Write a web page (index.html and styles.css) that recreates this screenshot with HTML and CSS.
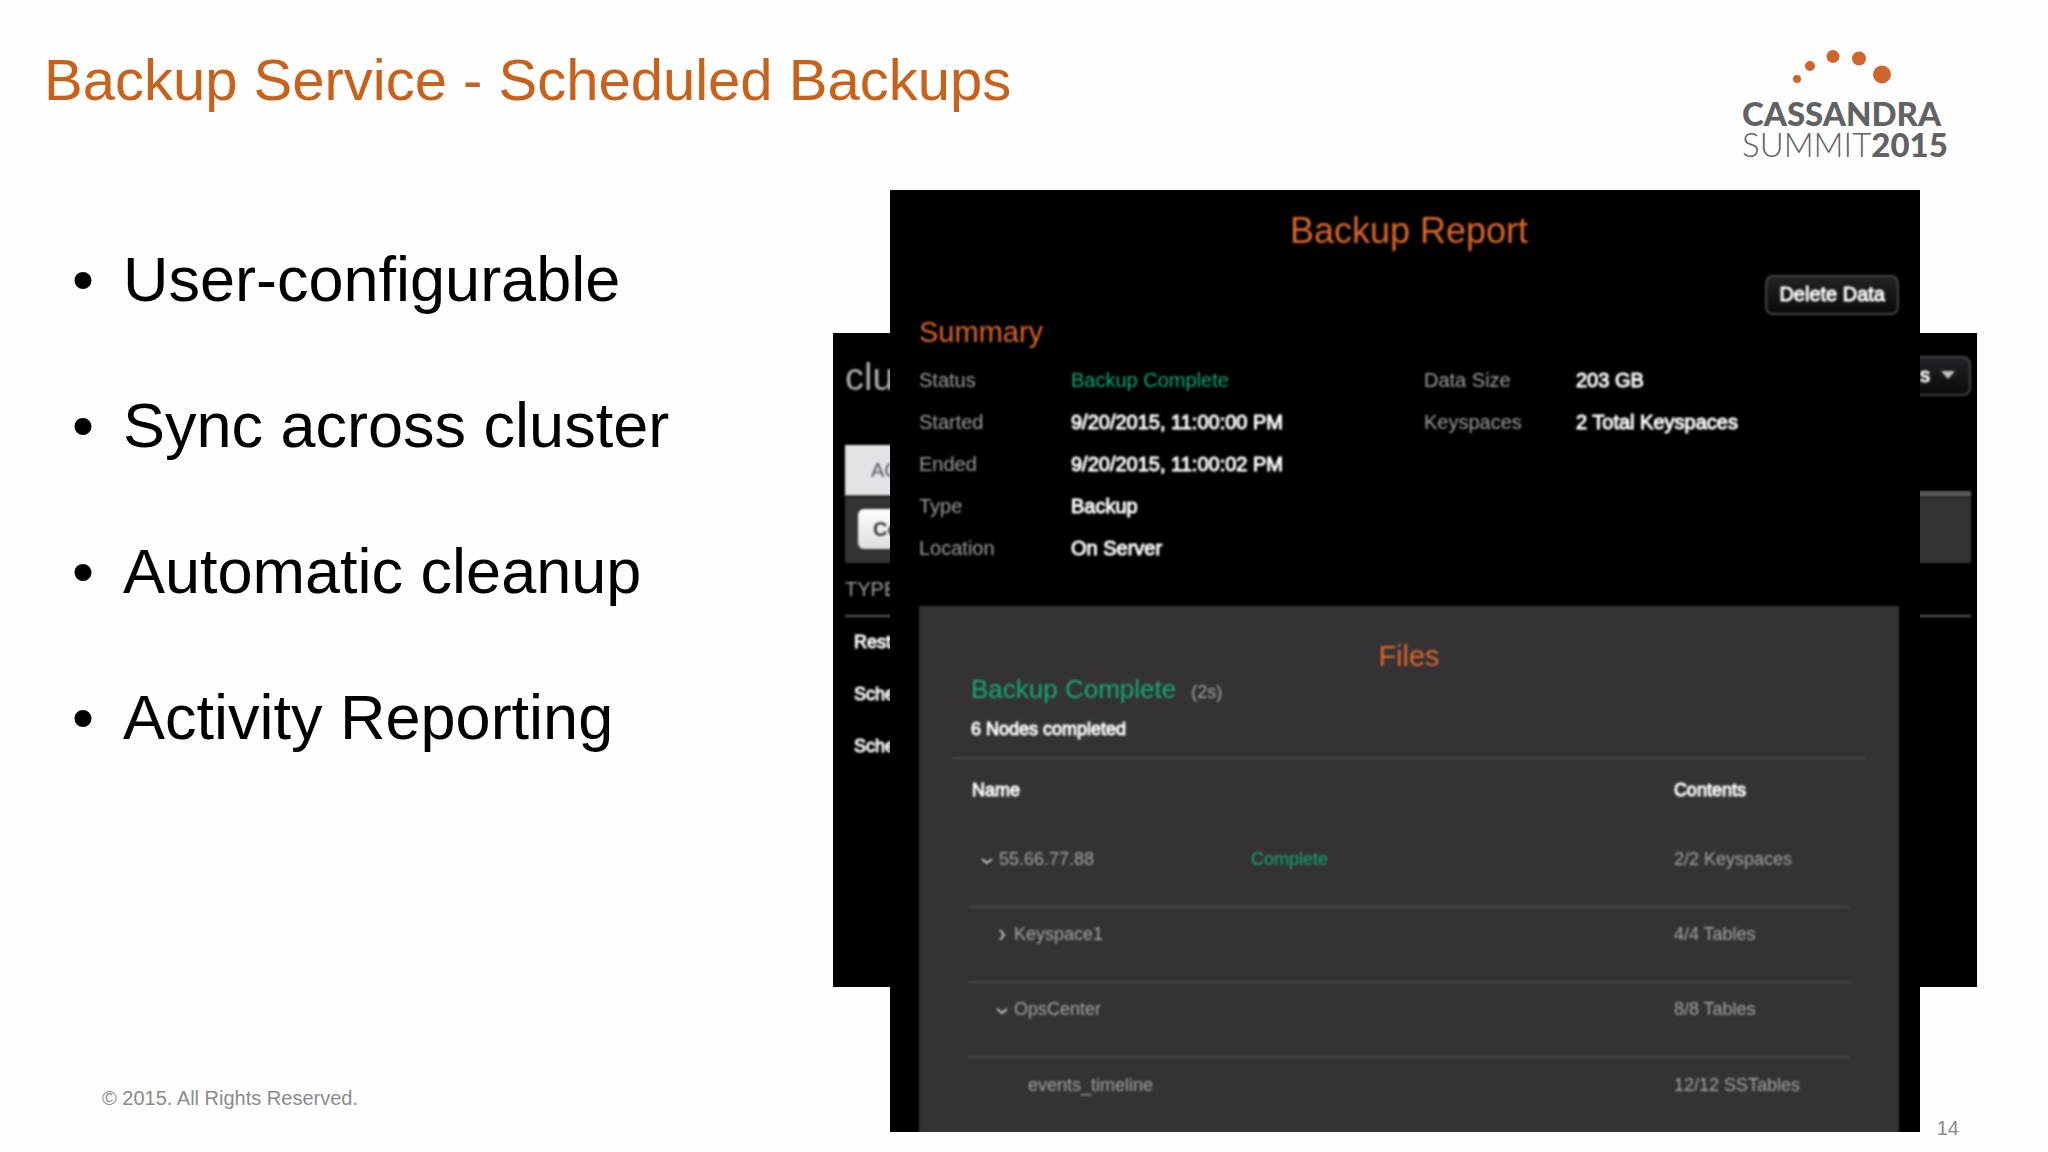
FILE: index.html
```html
<!DOCTYPE html>
<html lang="en">

<head>
    <meta charset="UTF-8">
    <meta name="viewport" content="width=device-width, initial-scale=1.0">
    <title>Backup Service - Scheduled Backups</title>
    <link rel="stylesheet" href="styles.css">
</head>

<body>
    <div class="slide">
        <header class="header">
            <h1 class="title">Backup Service - Scheduled Backups</h1>
            <div class="logo">
                <svg class="logo-dots" width="200" height="50" viewBox="0 0 200 50" aria-hidden="true">
                    <circle cx="55" cy="31" r="4" />
                    <circle cx="68" cy="18" r="5" />
                    <circle cx="91" cy="8.5" r="6.5" />
                    <circle cx="117" cy="10.5" r="7" />
                    <circle cx="140" cy="26.5" r="9" />
                </svg>
                <div class="logo-line logo-bold">CASSANDRA</div>
                <div class="logo-line">SUMMIT<span class="logo-bold">2015</span></div>
            </div>
        </header>
        <main class="main">
            <div class="left">
                <ul class="points">
                    <li>User-configurable</li>
                    <li>Sync across cluster</li>
                    <li>Automatic cleanup</li>
                    <li>Activity Reporting</li>
                </ul>
                <div class="copyright">© 2015. All Rights Reserved.</div>
            </div>
            <div class="screens">
                <!-- activity screen, behind the report -->
                <section class="activity">
                    <div class="activity-head">
                        <h2 class="cluster">clu</h2>
                        <button class="btn btn-menu" type="button">s
                            <svg width="14" height="8" viewBox="0 0 14 8" aria-hidden="true"><path d="M0 0h14L7 8z" /></svg>
                        </button>
                    </div>
                    <div class="tabs"><a class="tab" href="#">AC</a></div>
                    <div class="toolbar"><button class="btn-light" type="button">Co</button></div>
                    <table class="jobs">
                        <thead>
                            <tr><th>TYPE</th></tr>
                        </thead>
                        <tbody>
                            <tr><td>Rest</td></tr>
                            <tr><td>Sche</td></tr>
                            <tr><td>Sche</td></tr>
                        </tbody>
                    </table>
                </section>
                <!-- report -->
                <section class="report">
                    <h2 class="report-title">Backup Report</h2>
                    <div class="actions"><button class="btn" type="button">Delete Data</button></div>
                    <h3 class="heading">Summary</h3>
                    <div class="summary">
                        <dl class="facts">
                            <dt>Status</dt><dd class="ok">Backup Complete</dd>
                            <dt>Started</dt><dd>9/20/2015, 11:00:00 PM</dd>
                            <dt>Ended</dt><dd>9/20/2015, 11:00:02 PM</dd>
                            <dt>Type</dt><dd>Backup</dd>
                            <dt>Location</dt><dd>On Server</dd>
                        </dl>
                        <dl class="facts">
                            <dt>Data Size</dt><dd>203 GB</dd>
                            <dt>Keyspaces</dt><dd>2 Total Keyspaces</dd>
                        </dl>
                    </div>
                    <div class="files">
                        <h3 class="heading files-title">Files</h3>
                        <div class="files-status">
                            <div><span class="result">Backup Complete</span><span class="time">(2s)</span></div>
                            <div class="nodes">6 Nodes completed</div>
                        </div>
                        <table class="tree">
                            <thead>
                                <tr><th class="col-name">Name</th><th class="col-state"></th><th>Contents</th></tr>
                            </thead>
                            <tbody>
                                <tr>
                                    <td class="level-1"><svg class="arrow" viewBox="0 0 12 12" aria-hidden="true"><path d="M1 5l5 4 5-4" /></svg>55.66.77.88</td>
                                    <td class="ok">Complete</td>
                                    <td>2/2 Keyspaces</td>
                                </tr>
                                <tr>
                                    <td class="level-2"><svg class="arrow" viewBox="0 0 12 12" aria-hidden="true"><path d="M4 1l4 5-4 5" /></svg>Keyspace1</td>
                                    <td></td>
                                    <td>4/4 Tables</td>
                                </tr>
                                <tr>
                                    <td class="level-2"><svg class="arrow" viewBox="0 0 12 12" aria-hidden="true"><path d="M1 5l5 4 5-4" /></svg>OpsCenter</td>
                                    <td></td>
                                    <td>8/8 Tables</td>
                                </tr>
                                <tr>
                                    <td class="level-3">events_timeline</td>
                                    <td></td>
                                    <td>12/12 SSTables</td>
                                </tr>
                            </tbody>
                        </table>
                    </div>
                </section>
                <div class="page-number">14</div>
            </div>
        </main>
    </div>
</body>

</html>
```
FILE: styles.css
```css
* {
    box-sizing: border-box;
}

body,
h1,
h2,
h3,
ul,
dl,
dd {
    margin: 0;
    padding: 0;
    font-weight: normal;
}

body {
    background-color: #fefefe;
    color: #000;
    font-family: "Liberation Sans", Arial, sans-serif;
}

.slide {
    display: flex;
    flex-direction: column;
    min-height: 100vh;
    padding-bottom: 20px;
}

.header {
    display: flex;
    justify-content: space-between;
    height: 190px;
    padding: 48px 106px 0 44px;
}

.title {
    color: #c8611a;
    font-size: 58px;
    line-height: 64px;
}

.logo {
    width: 200px;
    color: #626164;
    font-family: Lato, sans-serif;
    font-size: 33px;
    font-weight: 300;
    white-space: nowrap;
}

.logo-dots {
    display: block;
    fill: #d0652b;
}

.logo-line {
    line-height: 31px;
}

.logo-bold {
    font-weight: 900;
}

.main {
    flex: 1;
    display: grid;
    grid-template-columns: 833fr 1144fr;
    padding-right: 71px;
}

.left {
    display: flex;
    flex-direction: column;
    justify-content: space-between;
}

.points {
    padding: 53px 0 0 123px;
    list-style: none;
    font-size: 63px;
    line-height: 72px;
}

.points li {
    margin-bottom: 74px;
}

.points li::before {
    content: "•";
    float: left;
    margin-left: -51px;
}

.copyright {
    padding: 0 0 22px 102px;
    color: #8b8b8b;
    font-size: 20px;
    line-height: 24px;
}

.screens {
    display: grid;
}

.activity,
.report,
.page-number {
    grid-area: 1 / 1;
}

/* the screens are soft next to the slide text */
.activity > *,
.report > * {
    filter: blur(1px);
}

/* activity screen */
.activity {
    align-self: start;
    height: 654px;
    margin-top: 143px;
    padding: 23px 6px 0 12px;
    background-color: #000;
    color: #fff;
}

.activity-head {
    display: flex;
    justify-content: space-between;
    height: 89px;
}

.cluster {
    color: #b0b0b0;
    font-size: 38px;
    line-height: 42px;
}

.btn {
    height: 40px;
    padding: 0 12px 2px;
    border: 2px solid #444246;
    border-radius: 8px;
    background: linear-gradient(#242226, #0a090b);
    color: #fff;
    font-family: inherit;
    font-size: 20px;
    -webkit-text-stroke: 1px;
}

.btn-menu {
    display: flex;
    align-items: center;
    gap: 11px;
    padding-right: 14px;
}

.btn-menu svg {
    fill: #c5c5c5;
}

.tabs {
    display: flex;
    height: 52px;
    border-bottom: 6px solid #5b595c;
}

.tab {
    height: 50px;
    padding: 0 26px;
    background-color: #e4e2e6;
    color: #5b595c;
    font-size: 20px;
    line-height: 50px;
    text-decoration: none;
}

.toolbar {
    height: 66px;
    padding: 12px 13px;
    background-color: #343235;
}

.btn-light {
    height: 40px;
    padding: 0 15px;
    border: 0;
    border-radius: 6px;
    background: linear-gradient(#fff, #dddce0);
    color: #39373a;
    font-family: inherit;
    font-size: 20px;
    font-weight: bold;
}

.jobs {
    width: 100%;
    border-collapse: collapse;
    text-align: left;
}

.jobs th {
    height: 53px;
    padding: 0;
    border-bottom: 2px solid #5b595c;
    color: #9d9d9d;
    font-size: 20px;
    font-weight: normal;
}

.jobs td {
    height: 52px;
    padding: 0 9px;
    font-size: 18px;
    -webkit-text-stroke: 1px;
}

/* report screen */
.report {
    z-index: 1;
    display: flex;
    flex-direction: column;
    margin: 0 57px;
    padding: 20px 21px 0 29px;
    background-color: #000;
    color: #fff;
    overflow: hidden;
}

.report-title {
    color: #dd6829;
    font-size: 36px;
    line-height: 42px;
    text-align: center;
}

.actions {
    display: flex;
    justify-content: flex-end;
    padding-top: 23px;
}

.heading {
    color: #dd6829;
    font-size: 29px;
    line-height: 34px;
}

.summary {
    display: grid;
    grid-template-columns: 505fr 475fr;
    padding: 10px 0 37px;
}

.facts {
    display: grid;
    grid-template-columns: 152px 1fr;
    align-content: start;
    font-size: 20px;
    line-height: 42px;
}

.facts dt {
    color: #9d9d9d;
}

.facts dd {
    -webkit-text-stroke: 1px;
}

.facts .ok,
.tree .ok,
.result {
    color: #12ab77;
    -webkit-text-stroke: 0;
}

.files {
    flex: 1;
    margin-bottom: -4px;
    padding: 33px 33px 0;
    background-color: #343235;
    font-size: 18px;
}

.files-title {
    text-align: center;
}

.files-status {
    padding: 0 19px 9px;
    border-bottom: 2px solid #48464a;
}

.result {
    margin-right: 15px;
    font-size: 26px;
    line-height: 32px;
}

.time {
    color: #a5a3a7;
}

.nodes {
    padding-top: 5px;
    line-height: 38px;
    -webkit-text-stroke: 1px;
}

.tree {
    width: calc(100% - 33px);
    margin-left: 16px;
    border-collapse: collapse;
    table-layout: fixed;
    text-align: left;
    color: #a5a3a7;
}

.tree th {
    height: 73px;
    padding: 0 3px 10px;
    color: #fff;
    font-weight: normal;
    -webkit-text-stroke: 1px;
}

.tree td {
    height: 75px;
    padding: 0 3px 20px;
    border-bottom: 2px solid #48464a;
}

.tree tr:last-child td {
    border-bottom: 0;
}

.tree .col-name {
    width: 280px;
    padding-left: 4px;
}

.tree .col-state {
    width: 48%;
}

.arrow {
    width: 12px;
    height: 12px;
    margin-right: 6px;
    vertical-align: -1px;
    fill: none;
    stroke: #c5c3c7;
    stroke-width: 2;
}

.tree .level-1 {
    padding-left: 13px;
}

.tree .level-2 {
    padding-left: 28px;
}

.tree .level-3 {
    padding-left: 60px;
}

.page-number {
    align-self: end;
    justify-self: end;
    margin: 0 18px -8px 0;
    color: #8b8b8b;
    font-size: 20px;
    line-height: 24px;
}
```
